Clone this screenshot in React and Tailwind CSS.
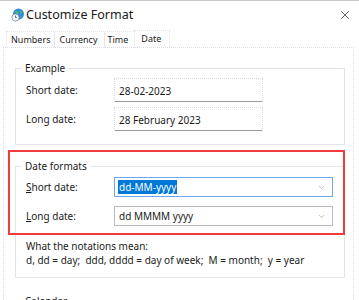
import { X, ChevronDown } from 'lucide-react';

const font = { fontFamily: '"Segoe UI", "Noto Sans", sans-serif' };

function GlobeIcon() {
  return (
    <svg width="14" height="14" viewBox="0 0 14 14">
      <circle cx="7.5" cy="6" r="5.5" fill="#2f8fdd" />
      <path d="M4 3.5c1.5-1 2.5 0 3 1.2s-1 1.5-.5 2.8S9 9 8 10.5" fill="#5bbf4a" />
      <path d="M9.5 2.2c.8.6 1.6 1.6 1.2 2.5s-1.5.4-1.8 1.4" fill="#5bbf4a" />
      <circle cx="4.5" cy="9.5" r="3.6" fill="#f4f6f8" stroke="#7a8896" strokeWidth="0.8" />
      <path d="M4.5 7.6v2h1.4" stroke="#3b4b5b" strokeWidth="0.8" fill="none" />
    </svg>
  );
}

function ValueBox({ children }) {
  return (
    <div className="w-[149px] h-[24px] flex items-center pl-[4px] border-t border-x border-dotted border-[#d6d6e2] border-b-0 relative">
      {children}
      <div className="absolute left-0 right-0 bottom-0 h-px bg-[#9a9a9a]" />
    </div>
  );
}

function Dropdown({ focused, children }) {
  return (
    <div
      className={`w-[219px] h-[20px] flex items-center justify-between pl-[3px] pr-[6px] bg-white border ${
        focused ? 'border-[#6ea8ec]' : 'border-[#b8b8c8]'
      }`}
    >
      {children}
      <ChevronDown size={9} strokeWidth={1.5} className="text-[#8a8a8a]" />
    </div>
  );
}

export default function App() {
  return (
    <div
      className="w-[359px] h-[300px] overflow-hidden bg-white text-[10px] leading-[16px] text-[#1b1b1b] relative"
      style={font}
    >
      <div className="absolute top-0 left-0 right-0 h-px bg-[#c8c8c0]" />

      {/* title bar */}
      <div className="h-[29px] flex items-center pl-[11px] pr-[7px]">
        <GlobeIcon />
        <span className="ml-[1px] text-[12.5px]">Customize Format</span>
        <X size={14} strokeWidth={1.3} className="ml-auto text-[#333]" />
      </div>

      {/* tabs */}
      <div className="h-[18px] flex items-end pl-[6px] text-[9px]">
        <div className="flex h-[16px] items-center border-l border-t border-dotted border-[#e2e2ea]">
          <span className="pl-[4px] pr-[4px]">Numbers</span>
          <span className="pl-[4px] pr-[6px] border-l border-[#e6e6ee]">Currency</span>
          <span className="pl-[3px] pr-[6px] border-l border-[#e6e6ee]">Time</span>
        </div>
        <div className="h-[18px] w-[36px] flex items-start pl-[6px] border-x border-t border-dotted border-[#e2e2ea] bg-white -mb-px relative">
          Date
        </div>
      </div>

      {/* panel */}
      <div className="ml-[3px] w-[351px] border border-dotted border-[#dcdce6] pt-[12px] pl-[11px] pr-[8px] relative">
        <fieldset className="border border-[#e4e4ee] pl-[10px] pb-[13px] m-0">
          <legend className="ml-[-4px] px-[3px]">Example</legend>
          <div className="flex items-center mt-[2px]">
            <span className="w-[88px]">Short date:</span>
            <ValueBox>28-02-2023</ValueBox>
          </div>
          <div className="flex items-center mt-[5px]">
            <span className="w-[88px]">Long date:</span>
            <ValueBox>28 February 2023</ValueBox>
          </div>
        </fieldset>

        <fieldset className="border border-[#e4e4ee] pl-[10px] pb-[10px] mt-[13px]">
          <legend className="ml-[-4px] px-[3px]">Date formats</legend>
          <div className="flex items-center mt-[3px]">
            <span className="w-[88px]">
              <span className="underline">S</span>hort date:
            </span>
            <Dropdown focused>
              <span className="bg-[#0078d7] text-white px-[1px] leading-[14px]">dd-MM-yyyy</span>
            </Dropdown>
          </div>
          <div className="flex items-center mt-[9px]">
            <span className="w-[88px]">
              <span className="underline">L</span>ong date:
            </span>
            <Dropdown>
              <span className="px-[1px]">dd MMMM yyyy</span>
            </Dropdown>
          </div>
          <div className="mt-[13px] leading-[14px]">
            <div>What the notations mean:</div>
            <div className="whitespace-pre">d, dd = day;  ddd, dddd = day of week;  M = month;  y = year</div>
          </div>
        </fieldset>

        <fieldset className="border border-[#e4e4ee] pl-[10px] mt-[15px] h-[40px]">
          <legend className="ml-[-4px] px-[3px]">Calendar</legend>
        </fieldset>

        {/* highlight annotation */}
        <div className="absolute left-[4px] top-[102px] w-[337px] h-[85px] border-2 border-[#f03c3c] pointer-events-none" />
      </div>
    </div>
  );
}
